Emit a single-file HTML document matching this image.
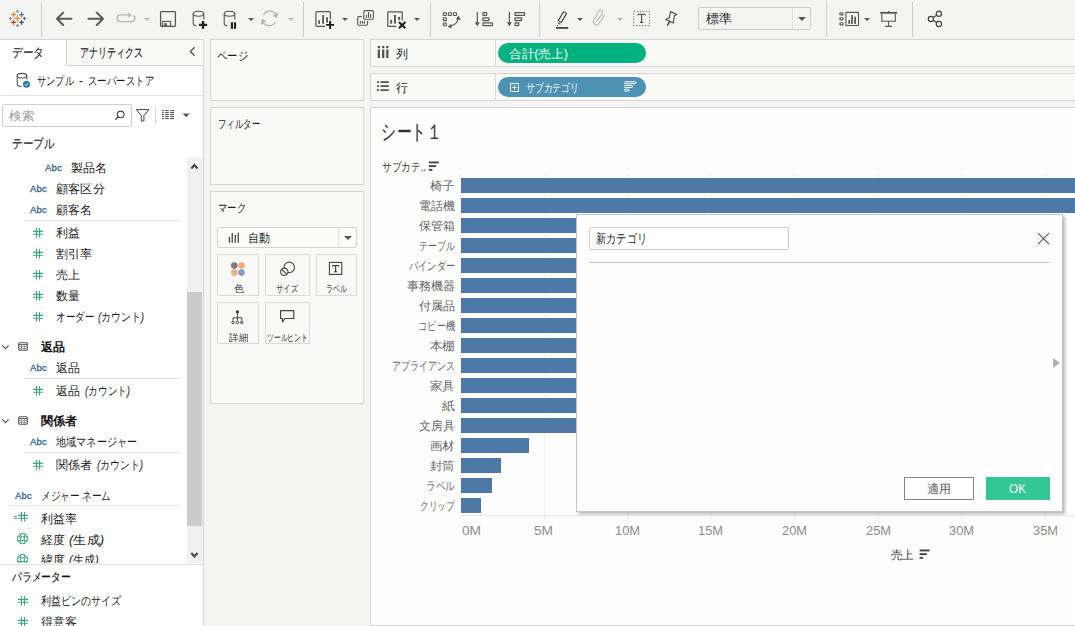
<!DOCTYPE html>
<html><head><meta charset="utf-8">
<style>
*{margin:0;padding:0;box-sizing:border-box}
html,body{width:1075px;height:626px;overflow:hidden;background:#f4f4f2;font-family:"Liberation Sans",sans-serif;color:#333;}
.a{position:absolute}
.t{position:absolute;white-space:nowrap;line-height:1}
svg{position:absolute;overflow:visible}
.sep{position:absolute;width:1px;background:#cdcdcd;top:2px;height:35px}
.panel{position:absolute;background:#f9f9f8;border:1px solid #d4d4d4}
.abc{position:absolute;font-size:9.5px;color:#30668f;line-height:1;-webkit-text-stroke:0.3px #30668f;letter-spacing:0.15px}
.dd{position:absolute;width:0;height:0;border-left:3px solid transparent;border-right:3px solid transparent;border-top:3.5px solid #555}
.ddg{border-top-color:#b4b4b4}
.bar{position:absolute;left:461px;height:15px;background:#4e79a7}
.grid{position:absolute;width:1px;background:#f0f0f0}
.mb{position:absolute;border:1px solid #dadada;background:#f9f9f8}
.hl{position:absolute;height:1px;background:#e2e2e2}

</style></head><body>
<!-- ===== TOOLBAR ===== -->
<div class="a" style="left:0;top:0;width:1075px;height:39px;background:#f4f4f2"></div>
<!-- tableau logo -->
<svg style="left:0;top:0" width="30" height="30"><g stroke-width="1.25" fill="none" stroke-linecap="butt">
<path d="M17.44 15.1 V21.7 M14.1 18.42 H20.8" stroke="#dc9533"/>
<path d="M13.5 12.1 V16.9 M11.1 14.5 H15.9" stroke="#da9236"/>
<path d="M21.55 12.1 V16.9 M19.15 14.5 H23.95" stroke="#4f78ad"/>
<path d="M13.5 20.05 V24.85 M11.1 22.45 H15.9" stroke="#b2452b"/>
<path d="M21.55 20.05 V24.85 M19.15 22.45 H23.95" stroke="#23589c"/>
<path d="M17.44 10 V13 M15.94 11.5 H18.94" stroke="#7f93b9" stroke-width="1.1"/>
<path d="M17.44 24.1 V27.1 M15.94 25.6 H18.94" stroke="#7f93b9" stroke-width="1.1"/>
<path d="M10.46 16.9 V19.9 M8.96 18.42 H11.96" stroke="#7f93b9" stroke-width="1.1"/>
<path d="M24.46 16.9 V19.9 M22.96 18.42 H25.96" stroke="#5c70a0" stroke-width="1.1"/>
</g></svg>
<div class="sep" style="left:41px"></div>
<!-- back/forward -->
<svg style="left:0;top:0" width="110" height="30"><g stroke="#5a5a5a" stroke-width="2" fill="none" stroke-linecap="round" stroke-linejoin="round">
<path d="M71.5 18.8 H57 M63.2 12.6 L57 18.8 L63.2 25"/>
<path d="M88.5 18.8 H103 M96.8 12.6 L103 18.8 L96.8 25"/>
</g></svg>
<!-- redo gray -->
<svg style="left:0;top:0" width="140" height="30"><g stroke="#b4b4b4" stroke-width="1.3" fill="none">
<path d="M129 14.8 H120.5 A3.4 3.4 0 0 0 120.5 21.6 H131.2 A3.4 3.4 0 0 0 133.5 15.5"/>
</g><path d="M128.3 12.3 L131.6 15 L128.3 17.8 Z" fill="#b4b4b4"/></svg>
<div class="dd ddg" style="left:143.5px;top:18px"></div>
<!-- save -->
<svg style="left:0;top:0" width="180" height="30"><g stroke="#555" fill="none">
<rect x="160.6" y="11.6" width="14.8" height="14.8" rx="0.8" stroke-width="1.3"/>
<rect x="162.6" y="21.4" width="8" height="5" stroke-width="1.1"/></g>
<rect x="164.3" y="23.2" width="2.6" height="3.2" fill="#555"/></svg>
<!-- db plus -->
<svg style="left:0;top:0" width="260" height="32"><g stroke="#555" stroke-width="1.1" fill="none">
<ellipse cx="198.5" cy="13.8" rx="5.3" ry="2.5"/>
<path d="M193.2 13.8 V23.5 Q193.2 25.5 196.5 25.8 M203.8 13.8 V19.5"/>
<ellipse cx="229.5" cy="13.8" rx="5.3" ry="2.5"/>
<path d="M224.2 13.8 V23.5 Q224.2 25.5 227.5 25.8 M234.8 13.8 V19.5"/>
</g>
<path d="M203 21 V28.8 M199 24.9 H207.1" stroke="#222" stroke-width="2.4"/>
<rect x="230.8" y="22.3" width="2.2" height="6.5" fill="#222"/><rect x="233.9" y="22.3" width="2.2" height="6.5" fill="#222"/>
</svg>
<div class="dd" style="left:247.5px;top:18px"></div>
<!-- refresh gray -->
<svg style="left:0;top:0" width="300" height="32"><g stroke="#b4b4b4" stroke-width="1.3" fill="none">
<path d="M263.5 15 A6.8 6.8 0 0 1 276 15.5"/>
<path d="M275.2 22 A6.8 6.8 0 0 1 262.8 21.5"/>
</g><path d="M277.8 12 L277.2 18 L272.5 16 Z M261 25 L261.6 19 L266.3 21 Z" fill="#b4b4b4"/></svg>
<div class="dd ddg" style="left:288px;top:18px"></div>
<div class="sep" style="left:303px"></div>
<!-- new worksheet -->
<svg style="left:0;top:0" width="350" height="32">
<path d="M325 26.4 H317.1 Q315.9 26.4 315.9 25.2 V12.8 Q315.9 11.6 317.1 11.6 H329.1 Q330.3 11.6 330.3 12.8 V19.6" fill="none" stroke="#555" stroke-width="1.2"/>
<rect x="318.2" y="20.3" width="1.8" height="3.5" fill="#555"/><rect x="322.2" y="15.1" width="1.8" height="8.7" fill="#555"/><rect x="326.2" y="17.2" width="1.8" height="5.4" fill="#555"/>
<path d="M330.1 20.9 V29 M326 24.9 H334.2" stroke="#f4f4f2" stroke-width="4"/>
<path d="M330.1 21.1 V28.9 M326.1 24.9 H334.1" stroke="#1e1a1c" stroke-width="1.9"/>
</svg>
<div class="dd" style="left:341.5px;top:18px"></div>
<!-- duplicate -->
<svg style="left:0;top:0" width="380" height="32"><g fill="none" stroke="#555" stroke-width="1.1">
<rect x="363.7" y="10.6" width="9.7" height="8.7" rx="1.3"/>
<path d="M361.7 16.6 H358.9 Q357.7 16.6 357.7 17.8 V24.1 Q357.7 25.3 358.9 25.3 H366.3 Q367.5 25.3 367.5 24.1 V21"/>
</g><g fill="#555"><rect x="365.9" y="15" width="1.15" height="2.7"/><rect x="367.95" y="12.2" width="1.15" height="5.5"/><rect x="369.95" y="14.1" width="1.15" height="3.6"/>
<rect x="359.85" y="21.1" width="1.15" height="2.6"/><rect x="361.95" y="21.1" width="1.15" height="2.6"/><rect x="363.85" y="21.1" width="1.15" height="2.6"/></g></svg>
<!-- clear sheet -->
<svg style="left:0;top:0" width="420" height="32">
<path d="M396 26.4 H388.2 Q387.8 26.4 387.8 26 V12.3 Q387.8 11.9 388.2 11.9 H401.8 Q402.2 11.9 402.2 12.3 V20.5" fill="none" stroke="#555" stroke-width="1.2"/>
<rect x="390.2" y="19.9" width="1.9" height="3.7" fill="#555"/><rect x="394" y="15" width="1.9" height="8.6" fill="#555"/><rect x="398.2" y="16.9" width="1.9" height="3" fill="#555"/>
<path d="M399 22 L405.3 28.2 M405.3 22 L399 28.2" stroke="#222" stroke-width="2.1"/>
</svg>
<div class="dd" style="left:413.5px;top:18px"></div>
<div class="sep" style="left:430px"></div>
<!-- swap -->
<svg style="left:0;top:0" width="470" height="32"><g fill="none" stroke="#555" stroke-width="1.1">
<rect x="443.3" y="12.7" width="3" height="2.8" rx="0.5"/><rect x="448.4" y="12.7" width="3" height="2.8" rx="0.5"/><rect x="453.5" y="12.7" width="3" height="2.8" rx="0.5"/>
<rect x="443.3" y="17.8" width="3" height="2.8" rx="0.5"/><rect x="443.3" y="23" width="3" height="2.8" rx="0.5"/>
<path d="M450 26 Q457 25 458.3 18.5"/>
</g><path d="M458.6 15.8 L455.8 19.6 L460.8 19.8 Z M447.6 26.6 L451.6 24 L451.4 28.6 Z" fill="#555"/></svg>
<!-- sort asc / desc -->
<svg style="left:0;top:0" width="530" height="32"><g stroke="#555" stroke-width="1.2" fill="none">
<path d="M477.3 12 V23.5"/><path d="M509.4 12 V23.5"/>
<rect x="482.9" y="12.6" width="3.8" height="2.8" rx="0.6"/><rect x="482.9" y="17.8" width="6" height="2.8" rx="0.6"/><rect x="482.9" y="22.9" width="9.6" height="2.8" rx="0.6"/>
<rect x="515" y="12.6" width="9.6" height="2.8" rx="0.6"/><rect x="515" y="17.8" width="6.6" height="2.8" rx="0.6"/><rect x="515" y="22.9" width="3.8" height="2.8" rx="0.6"/>
</g><path d="M474.8 22.3 L479.8 22.3 L477.3 26.2 Z M506.9 22.3 L511.9 22.3 L509.4 26.2 Z" fill="#555"/></svg>
<div class="sep" style="left:539px"></div>
<!-- highlighter -->
<svg style="left:0;top:0" width="590" height="32">
<path d="M563.6 11.6 L566.6 13.4 L561.3 22.4 L558.3 20.6 Z" fill="none" stroke="#444" stroke-width="1.1" stroke-linejoin="round"/><path d="M557.7 22.6 L560.4 24.2" stroke="#444" stroke-width="1.1"/><circle cx="557.4" cy="25.5" r="0.6" fill="#444"/>
<rect x="556" y="27" width="12.2" height="1.8" fill="#444"/>
</svg>
<div class="dd" style="left:577px;top:18px"></div>
<!-- paperclip gray -->
<svg style="left:0;top:0" width="610" height="32"><path d="M596 22 L602.5 13.5 A2.2 2.2 0 0 0 598.9 11 L593.9 19.8 A3 3 0 0 0 599 23.5 L604.5 15.2" fill="none" stroke="#b8b8b8" stroke-width="1.1"/></svg>
<div class="dd ddg" style="left:617px;top:18px"></div>
<!-- T box -->
<svg style="left:0;top:0" width="655" height="32">
<rect x="633.7" y="11.4" width="15.8" height="14.2" fill="none" stroke="#777" stroke-width="0.9" stroke-dasharray="1.6 1.4"/>
<path d="M638 14.2 H645.2 M641.6 14.2 V22.5 M640 22.5 H643.2" stroke="#444" stroke-width="1.1" fill="none"/>
<path d="M638 14.2 V15.6 M645.2 14.2 V15.6" stroke="#444" stroke-width="0.9"/>
</svg>
<!-- pin -->
<svg style="left:0;top:0" width="680" height="32"><path d="M670.6 11.6 L676.8 14.6 L674.3 15.8 L673.4 23 L665.6 19.4 L669.2 18 Z" fill="none" stroke="#444" stroke-width="1.1" stroke-linejoin="round"/><path d="M669.8 21.4 L667.5 25.2" stroke="#444" stroke-width="1.5" stroke-linecap="round"/></svg>
<!-- 標準 dropdown -->
<div class="a" style="left:698px;top:7px;width:113px;height:23px;border:1px solid #cdcdcd;border-radius:2px;background:#f4f4f2"></div>
<div class="a" style="left:792px;top:8px;width:1px;height:21px;background:#e0e0e0"></div>
<div class="dd" style="left:798px;top:17px;border-left-width:4px;border-right-width:4px;border-top-width:4.5px"></div>
<div class="sep" style="left:826px"></div>
<!-- show me -->
<svg style="left:0;top:0" width="870" height="32"><g fill="none" stroke="#555" stroke-width="1.1">
<rect x="839.85" y="12.75" width="3.2" height="2.1" rx="0.7"/><rect x="839.85" y="17.75" width="3.2" height="2.1" rx="0.7"/><rect x="839.85" y="22.75" width="3.2" height="2.1" rx="0.7"/>
<rect x="845.9" y="12.4" width="12.6" height="13.1" rx="0.4"/></g>
<rect x="848.4" y="20" width="1.7" height="3.9" fill="#555"/><rect x="851.2" y="15" width="1.7" height="8.9" fill="#555"/><rect x="854.3" y="16.7" width="1.7" height="7.2" fill="#555"/></svg>
<div class="dd" style="left:864px;top:18px"></div>
<!-- presentation -->
<svg style="left:0;top:0" width="900" height="32"><g fill="none" stroke="#555">
<path d="M880.2 12.8 H897" stroke-width="1.8"/>
<path d="M881.8 13.5 V21.3 H895.3 V13.5" stroke-width="1.1"/>
<path d="M888.6 21.3 V26.2 M885.2 26.4 H892" stroke-width="1.1"/>
<path d="M888.6 11 V12" stroke-width="1"/>
</g></svg>
<div class="sep" style="left:912px"></div>
<!-- share -->
<svg style="left:0;top:0" width="950" height="32"><g fill="none" stroke="#444" stroke-width="1.2">
<circle cx="938.9" cy="13.8" r="2.6"/><circle cx="930.9" cy="18.9" r="2.6"/><circle cx="938.9" cy="24" r="2.6"/>
<path d="M933.1 17.5 L936.7 15.2 M933.1 20.3 L936.7 22.6"/></g></svg>

<!-- ===== LEFT DATA PANE ===== -->
<div class="a" style="left:0;top:39px;width:204px;height:587px;background:#fff;border-top:1px solid #d4d4d4;border-right:1px solid #d4d4d4"></div>
<div class="a" style="left:66px;top:40px;width:137px;height:26px;background:#f9f9f8;border-left:1px solid #d4d4d4;border-bottom:1px solid #d4d4d4"></div>
<svg style="left:0;top:0" width="200" height="60"><path d="M194.7 47.2 L190.4 51.5 L194.7 55.8" fill="none" stroke="#505050" stroke-width="1.3"/></svg>
<!-- data source icon -->
<svg style="left:0;top:0" width="40" height="95"><g fill="none" stroke="#505050" stroke-width="1.05">
<ellipse cx="22" cy="75.7" rx="4.8" ry="2.3"/>
<path d="M17.2 75.7 V84.3 Q17.2 86.3 21.6 86.5 M26.8 75.7 V79.6"/></g>
<circle cx="26.5" cy="84.3" r="3.5" fill="#2c7ba3"/><path d="M24.8 84.4 L26 85.6 L28.2 83.2" fill="none" stroke="#fff" stroke-width="0.9"/></svg>
<div class="hl" style="left:0;top:95px;width:203px"></div>
<!-- search -->
<div class="a" style="left:2px;top:104px;width:130px;height:23px;border:1px solid #d0d0d0;border-radius:2px;background:#fff"></div>
<svg style="left:0;top:0" width="200" height="130">
<circle cx="120.7" cy="114.4" r="3.3" fill="none" stroke="#444" stroke-width="1.1"/><path d="M118.3 116.8 L115.3 119.7" stroke="#444" stroke-width="1.2"/>
<path d="M136.3 109.6 H148.9 L143.9 115.6 V121 H141.3 V115.6 Z" fill="none" stroke="#444" stroke-width="1"/>
<g fill="#555"><rect x="162" y="110" width="1.8" height="1.1"/><rect x="165.2" y="110" width="3.6" height="1.1"/><rect x="170.2" y="110" width="3.8" height="1.1"/><rect x="162" y="112" width="1.8" height="1.1"/><rect x="165.2" y="112" width="3.6" height="1.1"/><rect x="170.2" y="112" width="3.8" height="1.1"/><rect x="162" y="114" width="1.8" height="1.1"/><rect x="165.2" y="114" width="3.6" height="1.1"/><rect x="170.2" y="114" width="3.8" height="1.1"/><rect x="162" y="116" width="1.8" height="1.1"/><rect x="165.2" y="116" width="3.6" height="1.1"/><rect x="170.2" y="116" width="3.8" height="1.1"/><rect x="162" y="118" width="1.8" height="1.1"/><rect x="165.2" y="118" width="3.6" height="1.1"/><rect x="170.2" y="118" width="3.8" height="1.1"/></g>
<path d="M182.6 113.4 H189.8 L186.2 117.2 Z" fill="#555"/>
</svg>
<div class="a" style="left:155px;top:107px;width:1px;height:17px;background:#d6d6d6"></div>
<!-- scrollbar -->
<div class="a" style="left:187px;top:157px;width:16px;height:406px;background:#f0f0f0"></div>
<div class="a" style="left:187px;top:292px;width:15px;height:234px;background:#cbcbcb"></div>
<svg style="left:0;top:0" width="203" height="565"><g fill="none" stroke="#45454a" stroke-width="2" stroke-linejoin="miter">
<path d="M191.3 168.4 L194.4 165.1 L197.5 168.4" stroke-width="2.2"/>
<path d="M191.3 553.1 L194.4 556.4 L197.5 553.1" stroke-width="2.2"/></g></svg>
<!-- field icons -->
<div class="abc" style="left:45px;top:163px">Abc</div>
<div class="abc" style="left:30px;top:184px">Abc</div>
<div class="abc" style="left:30px;top:205px">Abc</div>
<div class="hl" style="left:24px;top:220px;width:156px"></div>
<svg style="left:0;top:0" width="60" height="630"><g stroke="#3ea57e" stroke-width="1.1" fill="none">
<path d="M36.5 228 V237.6 M39.5 228 V237.6 M33 231.4 H43 M33 234.2 H43"/>
<path d="M36.5 249 V258.6 M39.5 249 V258.6 M33 252.4 H43 M33 255.2 H43"/>
<path d="M36.5 270 V279.6 M39.5 270 V279.6 M33 273.4 H43 M33 276.2 H43"/>
<path d="M36.5 291 V300.6 M39.5 291 V300.6 M33 294.4 H43 M33 297.2 H43"/>
<path d="M36.5 312 V321.6 M39.5 312 V321.6 M33 315.4 H43 M33 318.2 H43"/>
<path d="M36.5 386 V395.6 M39.5 386 V395.6 M33 389.4 H43 M33 392.2 H43"/>
<path d="M36.5 460 V469.6 M39.5 460 V469.6 M33 463.4 H43 M33 466.2 H43"/>
<path d="M21.5 512 V521.6 M24.5 512 V521.6 M18 515.4 H28 M18 518.2 H28 M14 516.2 H17 M14 518.2 H17"/>
<path d="M21.5 596 V605.6 M24.5 596 V605.6 M18 599.4 H28 M18 602.2 H28"/>
<path d="M21.5 617 V626.6 M24.5 617 V626.6 M18 620.4 H28 M18 623.2 H28"/>
</g></svg>
<!-- table groups -->
<svg style="left:0;top:0" width="40" height="430"><g fill="none">
<path d="M2.2 345.4 L5.4 348.7 L8.6 345.4" stroke="#555" stroke-width="1.2"/>
<rect x="18.7" y="342.7" width="8.6" height="7.6" rx="1" stroke="#555" stroke-width="1.1"/>
<path d="M18.7 344.6 H27.3" stroke="#555" stroke-width="1"/>
<path d="M18.7 346.6 H27.3 M18.7 348.4 H27.3 M21.5 344.6 V350.3 M24.4 344.6 V350.3" stroke="#8a8585" stroke-width="0.8"/>
<path d="M2.2 419.4 L5.4 422.7 L8.6 419.4" stroke="#555" stroke-width="1.2"/>
<rect x="18.7" y="416.7" width="8.6" height="7.6" rx="1" stroke="#555" stroke-width="1.1"/>
<path d="M18.7 418.6 H27.3" stroke="#555" stroke-width="1"/>
<path d="M18.7 420.6 H27.3 M18.7 422.4 H27.3 M21.5 418.6 V424.3 M24.4 418.6 V424.3" stroke="#8a8585" stroke-width="0.8"/>
</g></svg>
<div class="abc" style="left:30px;top:363px">Abc</div>
<div class="hl" style="left:24px;top:378px;width:156px"></div>
<div class="abc" style="left:30px;top:437px">Abc</div>
<div class="hl" style="left:24px;top:452px;width:156px"></div>
<div class="abc" style="left:15px;top:491px">Abc</div>
<div class="hl" style="left:9px;top:505px;width:171px"></div>
<svg style="left:0;top:0" width="40" height="570"><g fill="none" stroke="#3ea57e" stroke-width="1">
<circle cx="22.5" cy="538.6" r="5.2"/><path d="M20.7 533.6 V543.6 M24.3 533.6 V543.6 M17.4 536.8 H27.6 M17.4 540.4 H27.6"/>
</g></svg>
<div class="a" style="left:0;top:550px;width:187px;height:13px;overflow:hidden;background:#fff">
<svg style="left:0;top:0" width="40" height="20"><g fill="none" stroke="#3ea57e" stroke-width="1">
<circle cx="22.5" cy="9.6" r="5.2"/><path d="M20.7 4.6 V14.6 M24.3 4.6 V14.6 M17.4 7.8 H27.6 M17.4 11.4 H27.6"/>
</g></svg>
<div class="t" style="left:41px;top:4px;font-size:12px;color:#1c1c1c">緯度</div><div class="t" style="left:69px;top:4px;font-size:12px;color:#1c1c1c;transform-origin:0 0;transform:scaleX(0.93)"><i>(</i>生成<i>)</i></div>
</div>
<div class="hl" style="left:0;top:564px;width:203px"></div>

<!-- ===== MIDDLE COLUMN ===== -->
<div class="panel" style="left:210px;top:39px;width:154px;height:62px"></div>
<div class="panel" style="left:210px;top:107px;width:154px;height:78px"></div>
<div class="panel" style="left:210px;top:191px;width:154px;height:213px"></div>
<div class="a" style="left:217px;top:227px;width:140px;height:21px;border:1px solid #d3d3d3;border-radius:2px;background:#fbfbfa"></div>
<div class="a" style="left:338px;top:228px;width:1px;height:19px;background:#e2e2e2"></div>
<div class="dd" style="left:343.5px;top:235.5px;border-left-width:4px;border-right-width:4px;border-top-width:4.5px"></div>
<svg style="left:0;top:0" width="250" height="250"><g fill="#444"><rect x="228.8" y="236.8" width="1.3" height="6"/><rect x="231.6" y="233" width="1.3" height="9.8"/><rect x="234.6" y="234.8" width="1.3" height="8"/><rect x="237.6" y="232.8" width="1.3" height="10"/></g></svg>
<div class="mb" style="left:217px;top:254px;width:42px;height:42px"></div>
<div class="mb" style="left:265px;top:254px;width:45px;height:42px"></div>
<div class="mb" style="left:316px;top:254px;width:41px;height:42px"></div>
<div class="mb" style="left:217px;top:302px;width:42px;height:42px"></div>
<div class="mb" style="left:265px;top:302px;width:45px;height:42px"></div>
<svg style="left:0;top:0" width="360" height="350">
<circle cx="234.3" cy="265.6" r="3.3" fill="#7d7b8b"/><circle cx="241.5" cy="265.6" r="3.3" fill="#e9b079"/>
<circle cx="234.3" cy="272.6" r="3.3" fill="#e9b079"/><circle cx="241.5" cy="272.6" r="3.3" fill="#8a9dc0"/>
<g fill="none" stroke="#444" stroke-width="1.1">
<circle cx="289.2" cy="267.4" r="5.3"/><circle cx="284.3" cy="271.8" r="3.7" fill="#f9f9f8"/><path d="M282 269.5 L286.6 274.1"/>
<rect x="329.4" y="262.4" width="12.4" height="12"/>
</g>
<path d="M332.5 265.5 H338.7 M335.6 265.5 V271.8 M334.2 271.8 H337" stroke="#333" stroke-width="1.1" fill="none"/>
<path d="M332.5 265.5 V266.8 M338.7 265.5 V266.8" stroke="#333" stroke-width="0.9"/>
<circle cx="237.4" cy="311.8" r="1.6" fill="#333"/>
<g fill="none" stroke="#444" stroke-width="1"><path d="M237.4 313 V317.8 M233 320.6 V317.8 H241.8 V320.6 M237.4 317.8 V320.6"/>
<circle cx="233" cy="322.4" r="1.25"/><circle cx="237.4" cy="322.4" r="1.25"/><circle cx="241.8" cy="322.4" r="1.25"/>
<path d="M280.6 310.6 H293.8 V318.5 H285 L282.4 321.8 V318.5 H280.6 Z" stroke-width="1.2" stroke-linejoin="round"/></g>
</svg>

<!-- ===== SHELVES ===== -->
<div class="panel" style="left:370px;top:39px;width:720px;height:28px"></div>
<div class="panel" style="left:370px;top:73px;width:720px;height:28px"></div>
<div class="a" style="left:495px;top:40px;width:1px;height:26px;background:#dcdcdc"></div>
<div class="a" style="left:495px;top:74px;width:1px;height:26px;background:#dcdcdc"></div>
<svg style="left:0;top:0" width="400" height="100"><g fill="#555">
<rect x="377.7" y="46" width="2.3" height="2.2"/><rect x="382" y="46" width="2.3" height="2.2"/><rect x="386.2" y="46" width="2.3" height="2.2"/>
<rect x="377.7" y="49.5" width="2.3" height="8.5"/><rect x="382" y="49.5" width="2.3" height="8.5"/><rect x="386.2" y="49.5" width="2.3" height="8.5"/>
<rect x="377" y="81.2" width="2" height="1.8"/><rect x="380.5" y="81.2" width="8.3" height="1.8"/>
<rect x="377" y="85.2" width="2" height="1.8"/><rect x="380.5" y="85.2" width="8.3" height="1.8"/>
<rect x="377" y="89.2" width="2" height="1.8"/><rect x="380.5" y="89.2" width="8.3" height="1.8"/>
</g></svg>
<div class="a" style="left:498px;top:43px;width:148px;height:20px;border-radius:10px;background:#02b180"></div>
<div class="a" style="left:498px;top:77px;width:148px;height:20px;border-radius:10px;background:#4b92b3"></div>
<svg style="left:0;top:0" width="650" height="100"><g fill="none" stroke="#fff" stroke-width="1">
<rect x="510.5" y="83.5" width="8" height="8"/><path d="M512.4 87.5 H516.6 M514.5 85.4 V89.6"/>
<rect x="624.5" y="81.8" width="11.4" height="2" rx="0.8"/><rect x="624.5" y="85.5" width="8" height="2" rx="0.8"/><rect x="624.5" y="89.2" width="4.6" height="2" rx="0.8"/>
</g></svg>

<!-- ===== SHEET ===== -->
<div class="a" style="left:370px;top:107px;width:720px;height:519px;background:#fefefe;border:1px solid #d4d4d4"></div>
<svg style="left:0;top:0" width="450" height="180"><g fill="#444"><rect x="428.8" y="161.5" width="10" height="1.9"/><rect x="428.8" y="165.2" width="7.2" height="1.9"/><rect x="428.8" y="168.9" width="3.6" height="1.9"/></g></svg>
<!-- gridlines -->
<div class="grid" style="left:460px;top:174px;height:345px"></div>
<div class="grid" style="left:544px;top:174px;height:346px"></div>
<div class="grid" style="left:627px;top:174px;height:346px"></div>
<div class="grid" style="left:711px;top:174px;height:346px"></div>
<div class="grid" style="left:794px;top:174px;height:346px"></div>
<div class="grid" style="left:878px;top:174px;height:346px"></div>
<div class="grid" style="left:961px;top:174px;height:346px"></div>
<div class="grid" style="left:1045px;top:174px;height:346px"></div>
<div class="a" style="left:460px;top:515px;width:615px;height:1px;background:#ececec"></div>
<div class="bar" style="top:178px;width:614px"></div>
<div class="bar" style="top:198px;width:614px"></div>
<div class="bar" style="top:218px;width:300px"></div>
<div class="bar" style="top:238px;width:300px"></div>
<div class="bar" style="top:258px;width:300px"></div>
<div class="bar" style="top:278px;width:300px"></div>
<div class="bar" style="top:298px;width:300px"></div>
<div class="bar" style="top:318px;width:300px"></div>
<div class="bar" style="top:338px;width:300px"></div>
<div class="bar" style="top:358px;width:300px"></div>
<div class="bar" style="top:378px;width:300px"></div>
<div class="bar" style="top:398px;width:300px"></div>
<div class="bar" style="top:418px;width:300px"></div>
<div class="bar" style="top:438px;width:68px"></div>
<div class="bar" style="top:458px;width:40px"></div>
<div class="bar" style="top:478px;width:31px"></div>
<div class="bar" style="top:498px;width:20px"></div>
<svg style="left:0;top:0" width="940" height="560"><g fill="#444"><rect x="919.6" y="549.5" width="10" height="1.9"/><rect x="919.6" y="553.2" width="7.2" height="1.9"/><rect x="919.6" y="556.9" width="3.6" height="1.9"/></g></svg>

<!-- ===== DIALOG ===== -->
<div class="a" style="left:576px;top:214px;width:487px;height:298px;background:#fefefe;border:1px solid #c4c4c4;box-shadow:2px 2px 3px rgba(0,0,0,0.28)"></div>
<div class="a" style="left:589px;top:227px;width:200px;height:23px;border:1px solid #cfcfcf;border-radius:2px;background:#fff"></div>
<div class="a" style="left:589px;top:262px;width:461px;height:1px;background:#c9c9c9"></div>
<svg style="left:0;top:0" width="1075" height="520"><path d="M1038 233.2 L1049 244.2 M1049 233.2 L1038 244.2" stroke="#555" stroke-width="1.1"/>
<path d="M1053.2 358 L1059.8 363 L1053.2 368 Z" fill="#b0b0b0"/></svg>
<div class="a" style="left:904px;top:477px;width:70px;height:23px;border:1px solid #86868e;background:#fff"></div>
<div class="a" style="left:986px;top:477px;width:64px;height:23px;background:#34c796"></div>

<div id="t0" class="t" style="left:12px;transform-origin:0 0;top:46px;font-size:13px;color:#222;transform:scaleX(0.8205);-webkit-text-stroke:0.15px currentColor;">データ</div>
<div id="t1" class="t" style="left:80px;transform-origin:0 0;top:46px;font-size:13px;color:#222;transform:scaleX(0.6923);-webkit-text-stroke:0.15px currentColor;">アナリティクス</div>
<div id="t2" class="t" style="left:37px;transform-origin:0 0;top:75px;font-size:12px;color:#1c1c1c;transform:scaleX(0.7708);">サンプル</div>
<div id="t3" class="t" style="left:79px;transform-origin:0 0;top:75px;font-size:12px;color:#1c1c1c;">-</div>
<div id="t4" class="t" style="left:88px;transform-origin:0 0;top:75px;font-size:12px;color:#1c1c1c;transform:scaleX(0.7857);">スーパーストア</div>
<div id="t5" class="t" style="left:9px;transform-origin:0 0;top:110px;font-size:12px;color:#999;transform:scaleX(1.0417);">検索</div>
<div id="t6" class="t" style="left:12px;transform-origin:0 0;top:137px;font-size:13px;color:#222;transform:scaleX(0.8077);-webkit-text-stroke:0.15px currentColor;">テーブル</div>
<div id="t7" class="t" style="left:71px;transform-origin:0 0;top:162px;font-size:12px;color:#1c1c1c;">製品名</div>
<div id="t8" class="t" style="left:56px;transform-origin:0 0;top:183px;font-size:12px;color:#1c1c1c;transform:scaleX(1.0208);">顧客区分</div>
<div id="t9" class="t" style="left:56px;transform-origin:0 0;top:204px;font-size:12px;color:#1c1c1c;">顧客名</div>
<div id="t10" class="t" style="left:56px;transform-origin:0 0;top:227px;font-size:12px;color:#1c1c1c;">利益</div>
<div id="t11" class="t" style="left:56px;transform-origin:0 0;top:248px;font-size:12px;color:#1c1c1c;">割引率</div>
<div id="t12" class="t" style="left:56px;transform-origin:0 0;top:269px;font-size:12px;color:#1c1c1c;">売上</div>
<div id="t13" class="t" style="left:56px;transform-origin:0 0;top:290px;font-size:12px;color:#1c1c1c;">数量</div>
<div id="t14" class="t" style="left:56px;transform-origin:0 0;top:311px;font-size:12px;color:#1c1c1c;transform:scaleX(0.7917);">オーダー</div>
<div id="t15" class="t" style="left:98px;transform-origin:0 0;top:311px;font-size:12px;color:#1c1c1c;transform:scaleX(0.8214);"><i>(</i>カウント<i>)</i></div>
<div id="t16" class="t" style="left:56px;transform-origin:0 0;top:362px;font-size:12px;color:#1c1c1c;">返品</div>
<div id="t17" class="t" style="left:56px;transform-origin:0 0;top:385px;font-size:12px;color:#1c1c1c;">返品</div>
<div id="t18" class="t" style="left:85px;transform-origin:0 0;top:385px;font-size:12px;color:#1c1c1c;transform:scaleX(0.8036);"><i>(</i>カウント<i>)</i></div>
<div id="t19" class="t" style="left:56px;transform-origin:0 0;top:436px;font-size:12px;color:#1c1c1c;transform:scaleX(0.8438);">地域マネージャー</div>
<div id="t20" class="t" style="left:56px;transform-origin:0 0;top:459px;font-size:12px;color:#1c1c1c;">関係者</div>
<div id="t21" class="t" style="left:97px;transform-origin:0 0;top:459px;font-size:12px;color:#1c1c1c;transform:scaleX(0.8214);"><i>(</i>カウント<i>)</i></div>
<div id="t22" class="t" style="left:41px;transform-origin:0 0;top:490px;font-size:12px;color:#1c1c1c;transform:scaleX(0.8014);">メジャー ネーム</div>
<div id="t23" class="t" style="left:41px;transform-origin:0 0;top:513px;font-size:12px;color:#1c1c1c;">利益率</div>
<div id="t24" class="t" style="left:41px;transform-origin:0 0;top:534px;font-size:12px;color:#1c1c1c;">経度</div>
<div id="t25" class="t" style="left:69px;transform-origin:0 0;top:534px;font-size:12px;color:#1c1c1c;transform:scaleX(1.0938);"><i>(</i>生成<i>)</i></div>
<div id="t26" class="t" style="left:41px;transform-origin:0 0;top:595px;font-size:12px;color:#1c1c1c;transform:scaleX(0.8333);">利益ビンのサイズ</div>
<div id="t27" class="t" style="left:41px;transform-origin:0 0;top:616px;font-size:12px;color:#1c1c1c;">得意客</div>
<div id="t28" class="t" style="left:41px;transform-origin:0 0;top:341px;font-size:12px;color:#111;font-weight:bold">返品</div>
<div id="t29" class="t" style="left:41px;transform-origin:0 0;top:415px;font-size:12px;color:#111;font-weight:bold">関係者</div>
<div id="t30" class="t" style="left:12px;transform-origin:0 0;top:571px;font-size:12px;color:#111;transform:scaleX(0.8194);-webkit-text-stroke:0.15px #111">パラメーター</div>
<div id="t31" class="t" style="left:217px;transform-origin:0 0;top:50px;font-size:12px;color:#1c1c1c;transform:scaleX(0.8611);">ページ</div>
<div id="t32" class="t" style="left:218px;transform-origin:0 0;top:118px;font-size:12px;color:#1c1c1c;transform:scaleX(0.7000);">フィルター</div>
<div id="t33" class="t" style="left:218px;transform-origin:0 0;top:202px;font-size:12px;color:#1c1c1c;transform:scaleX(0.7778);">マーク</div>
<div id="t34" class="t" style="left:248px;transform-origin:0 0;top:232px;font-size:12px;color:#1c1c1c;transform:scaleX(0.9167);">自動</div>
<div id="t35" class="t" style="left:234px;transform-origin:0 0;top:284px;font-size:10px;color:#333;">色</div>
<div id="t36" class="t" style="left:276px;transform-origin:0 0;top:284px;font-size:10px;color:#333;transform:scaleX(0.7333);">サイズ</div>
<div id="t37" class="t" style="left:326px;transform-origin:0 0;top:284px;font-size:10px;color:#333;transform:scaleX(0.7000);">ラベル</div>
<div id="t38" class="t" style="left:229px;transform-origin:0 0;top:333px;font-size:10px;color:#333;transform:scaleX(0.9500);">詳細</div>
<div id="t39" class="t" style="left:267px;transform-origin:0 0;top:333px;font-size:10px;color:#333;transform:scaleX(0.6833);">ツールヒント</div>
<div id="t40" class="t" style="left:396px;transform-origin:0 0;top:48px;font-size:12px;color:#1c1c1c;">列</div>
<div id="t41" class="t" style="left:396px;transform-origin:0 0;top:82px;font-size:12px;color:#1c1c1c;">行</div>
<div id="t42" class="t" style="left:509px;transform-origin:0 0;top:48px;font-size:12px;color:#fff;transform:scaleX(1.0536);">合計(売上)</div>
<div id="t43" class="t" style="left:526px;transform-origin:0 0;top:82px;font-size:12px;color:#fff;transform:scaleX(0.7361);">サブカテゴリ</div>
<div id="t44" class="t" style="left:706px;transform-origin:0 0;top:12px;font-size:13px;color:#1c1c1c;">標準</div>
<div id="t45" class="t" style="left:381px;transform-origin:0 0;top:121px;font-size:21px;color:#333;transform:scaleX(0.7093);-webkit-text-stroke:0.15px currentColor;">シート１</div>
<div id="t46" class="t" style="left:382px;transform-origin:0 0;top:161px;font-size:12px;color:#333;transform:scaleX(0.8048);">サブカテ..</div>
<div id="t47" class="t" style="right:620px;transform-origin:100% 0;top:180px;font-size:12px;color:#666;transform:scaleX(1.0417);">椅子</div>
<div id="t48" class="t" style="right:620px;transform-origin:100% 0;top:200px;font-size:12px;color:#666;">電話機</div>
<div id="t49" class="t" style="right:620px;transform-origin:100% 0;top:220px;font-size:12px;color:#666;">保管箱</div>
<div id="t50" class="t" style="right:620px;transform-origin:100% 0;top:240px;font-size:12px;color:#666;transform:scaleX(0.7500);">テーブル</div>
<div id="t51" class="t" style="right:620px;transform-origin:100% 0;top:260px;font-size:12px;color:#666;transform:scaleX(0.7667);">バインダー</div>
<div id="t52" class="t" style="right:620px;transform-origin:100% 0;top:280px;font-size:12px;color:#666;">事務機器</div>
<div id="t53" class="t" style="right:620px;transform-origin:100% 0;top:300px;font-size:12px;color:#666;">付属品</div>
<div id="t54" class="t" style="right:620px;transform-origin:100% 0;top:320px;font-size:12px;color:#666;transform:scaleX(0.7708);">コピー機</div>
<div id="t55" class="t" style="right:620px;transform-origin:100% 0;top:340px;font-size:12px;color:#666;transform:scaleX(1.0417);">本棚</div>
<div id="t56" class="t" style="right:620px;transform-origin:100% 0;top:360px;font-size:12px;color:#666;transform:scaleX(0.7500);">アプライアンス</div>
<div id="t57" class="t" style="right:620px;transform-origin:100% 0;top:380px;font-size:12px;color:#666;transform:scaleX(1.0417);">家具</div>
<div id="t58" class="t" style="right:620px;transform-origin:100% 0;top:400px;font-size:12px;color:#666;transform:scaleX(1.0833);">紙</div>
<div id="t59" class="t" style="right:620px;transform-origin:100% 0;top:420px;font-size:12px;color:#666;">文房具</div>
<div id="t60" class="t" style="right:620px;transform-origin:100% 0;top:440px;font-size:12px;color:#666;transform:scaleX(1.0417);">画材</div>
<div id="t61" class="t" style="right:620px;transform-origin:100% 0;top:460px;font-size:12px;color:#666;transform:scaleX(1.0417);">封筒</div>
<div id="t62" class="t" style="right:620px;transform-origin:100% 0;top:480px;font-size:12px;color:#666;transform:scaleX(0.8056);">ラベル</div>
<div id="t63" class="t" style="right:620px;transform-origin:100% 0;top:500px;font-size:12px;color:#666;transform:scaleX(0.7292);">クリップ</div>
<div id="t64" class="t" style="left:462px;transform-origin:0 0;top:525px;font-size:12px;color:#8a8a8a;transform:scaleX(1.1396);">0M</div>
<div id="t65" class="t" style="left:534px;transform-origin:0 0;top:525px;font-size:12px;color:#8a8a8a;transform:scaleX(1.1396);">5M</div>
<div id="t66" class="t" style="left:615px;transform-origin:0 0;top:525px;font-size:12px;color:#8a8a8a;transform:scaleX(1.0710);">10M</div>
<div id="t67" class="t" style="left:698px;transform-origin:0 0;top:525px;font-size:12px;color:#8a8a8a;transform:scaleX(1.0710);">15M</div>
<div id="t68" class="t" style="left:782px;transform-origin:0 0;top:525px;font-size:12px;color:#8a8a8a;transform:scaleX(1.0710);">20M</div>
<div id="t69" class="t" style="left:866px;transform-origin:0 0;top:525px;font-size:12px;color:#8a8a8a;transform:scaleX(1.0710);">25M</div>
<div id="t70" class="t" style="left:949px;transform-origin:0 0;top:525px;font-size:12px;color:#8a8a8a;transform:scaleX(1.0710);">30M</div>
<div id="t71" class="t" style="left:1033px;transform-origin:0 0;top:525px;font-size:12px;color:#8a8a8a;transform:scaleX(1.0710);">35M</div>
<div id="t72" class="t" style="left:891px;transform-origin:0 0;top:549px;font-size:12px;color:#333;transform:scaleX(0.9583);">売上</div>
<div id="t73" class="t" style="left:596px;transform-origin:0 0;top:232px;font-size:13px;color:#1c1c1c;transform:scaleX(0.7846);">新カテゴリ</div>
<div id="t74" class="t" style="left:927px;transform-origin:0 0;top:483px;font-size:12px;color:#555;">適用</div>
<div id="t75" class="t" style="left:1009px;transform-origin:0 0;top:482px;font-size:13px;color:#fff;transform:scaleX(0.9044);">OK</div>
<script>(function(){var W={"t0":32,"t1":63,"t2":37,"t4":66,"t5":25,"t6":42,"t7":36,"t8":49,"t14":38,"t15":46,"t18":45,"t19":81,"t21":46,"t22":70,"t25":35,"t26":80,"t30":59,"t31":31,"t32":42,"t33":28,"t34":22,"t35":10,"t36":22,"t37":21,"t38":19,"t39":41,"t42":59,"t43":53,"t44":26,"t45":61,"t46":44,"t47":25,"t48":36,"t49":36,"t50":36,"t51":46,"t52":48,"t53":36,"t54":37,"t55":25,"t56":63,"t57":25,"t58":13,"t59":36,"t60":25,"t61":25,"t62":29,"t63":35,"t64":19,"t65":19,"t66":25,"t67":25,"t68":25,"t69":25,"t70":25,"t71":25,"t72":23,"t73":51,"t74":24,"t75":17};for(var k in W){var e=document.getElementById(k);if(!e)continue;var o=e.style.transform;e.style.transform='none';var r=document.createRange();r.selectNodeContents(e);var w=r.getBoundingClientRect().width;if(w>0){e.style.transform='scaleX('+(W[k]/w).toFixed(4)+')';}else{e.style.transform=o;}}})();</script>
</body></html>
